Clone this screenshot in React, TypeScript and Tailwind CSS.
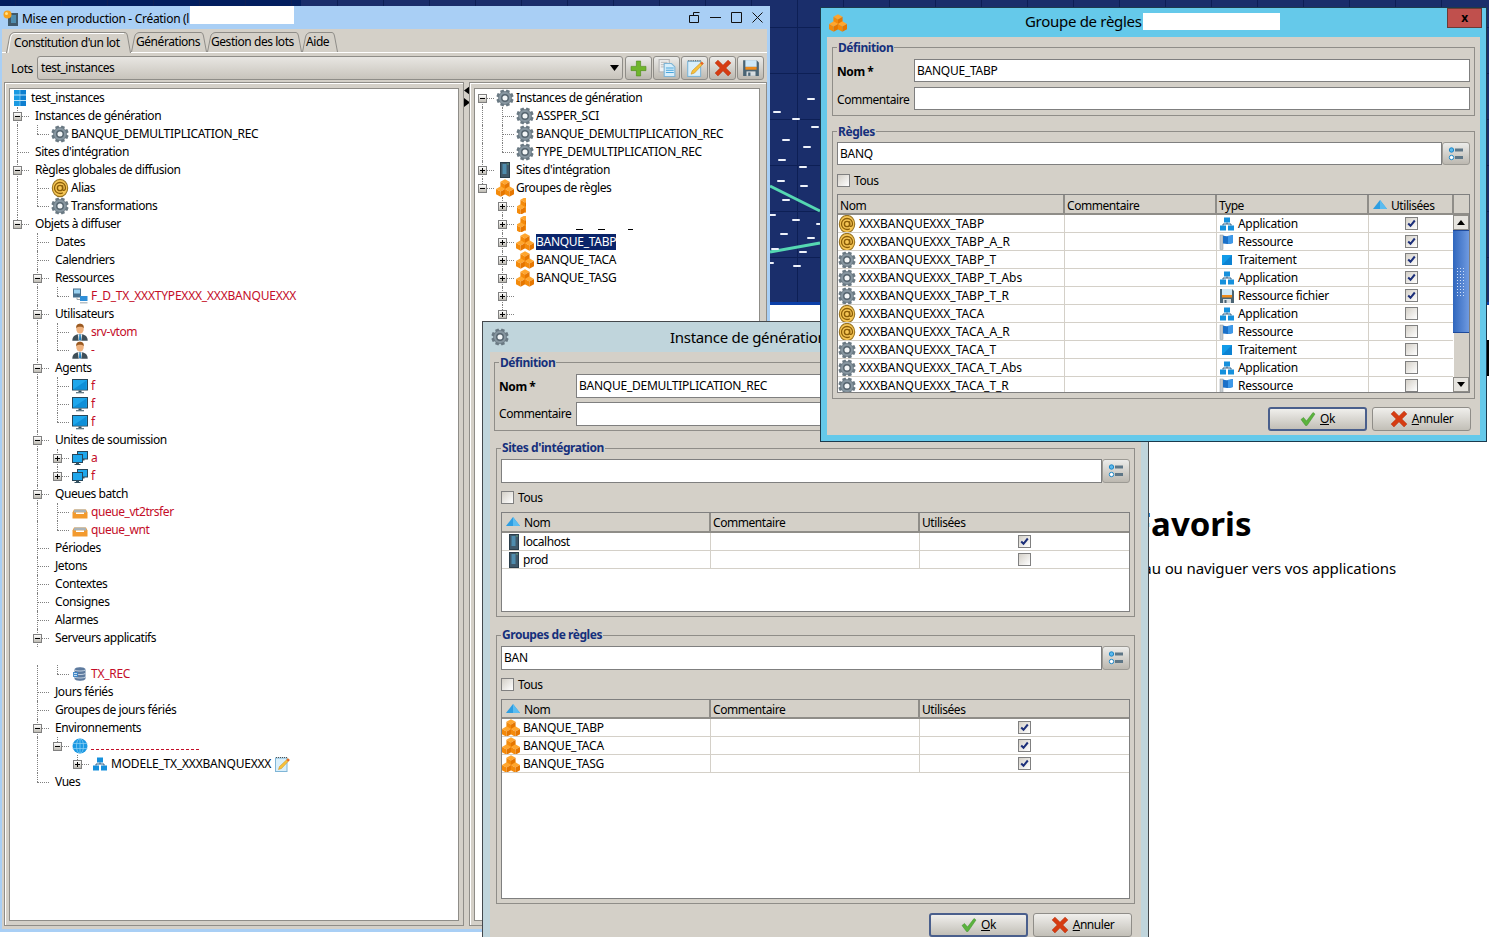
import React from "react";

type IconName =
  | "gear" | "at" | "cubes" | "server" | "monitor" | "monitors" | "hier" | "flag" | "square" | "floppy"
  | "note" | "tray" | "db" | "user" | "res" | "stack" | "globe" | "plus" | "copy" | "cross" | "check" | "list" | "sort";

const gearPath = (() => {
  const n = 8;
  let d = "";
  for (let i = 0; i < n; i++) {
    const a = (i / n) * Math.PI * 2 + Math.PI / 8;
    const w = 0.23;
    const pts: [number, number][] = [
      [6.1, a - w * 1.35],
      [8, a - w * 0.85],
      [8, a + w * 0.85],
      [6.1, a + w * 1.35],
    ];
    pts.forEach(([r, t], idx) => {
      const x = (8 + r * Math.cos(t)).toFixed(2);
      const y = (8 + r * Math.sin(t)).toFixed(2);
      d += (i === 0 && idx === 0 ? "M" : "L") + x + " " + y + " ";
    });
  }
  return d + "Z";
})();

function Cube({ x, y, r }: { x: number; y: number; r: number }) {
  const k = r * 0.87;
  return (
    <g>
      <path d={`M${x} ${y - r}L${x + k} ${y - r / 2}L${x} ${y}L${x - k} ${y - r / 2}Z`} fill="#ffa62e" />
      <path d={`M${x - k} ${y - r / 2}L${x} ${y}L${x} ${y + r}L${x - k} ${y + r / 2}Z`} fill="#f48a0a" />
      <path d={`M${x + k} ${y - r / 2}L${x} ${y}L${x} ${y + r}L${x + k} ${y + r / 2}Z`} fill="#e57600" />
    </g>
  );
}

function Icon({ name, className = "w-4 h-4" }: { name: IconName; className?: string }) {
  const p = { viewBox: "0 0 16 16", className: className + " shrink-0 overflow-visible" };
  const big = { viewBox: "0 0 16 16", className: className + " shrink-0 overflow-visible scale-[1.1]" };
  switch (name) {
    case "gear":
      return (
        <svg {...big}>
          <path d={gearPath} fill="#6a7983" />
          <circle cx="8" cy="8" r="5.6" fill="#8796a0" />
          <circle cx="8" cy="8" r="3.6" fill="#55646e" />
          <circle cx="8" cy="8" r="2.3" fill="#f2f5f6" />
        </svg>
      );
    case "at":
      return (
        <svg {...big}>
          <ellipse cx="8" cy="8" rx="7" ry="7.8" fill="#f6c655" stroke="#9a7420" strokeWidth="1" />
          <circle cx="8" cy="8" r="2.4" fill="none" stroke="#8a5d08" strokeWidth="1.3" />
          <path d="M10.4 5.6V9.2c0 1.6 2.6 1.4 2.6-1.2 0-3-2.2-5-5-5S3 5.2 3 8s2.2 5 5 5c1 0 1.8-.2 2.6-.7" fill="none" stroke="#8a5d08" strokeWidth="1.2" />
        </svg>
      );
    case "cubes":
      return (
        <svg {...big}>
          <Cube x={8} y={4.8} r={4.8} />
          <Cube x={4} y={11.2} r={4.8} />
          <Cube x={12} y={11.2} r={4.8} />
        </svg>
      );
    case "server":
      return (
        <svg {...p}>
          <rect x="3.5" y="0.5" width="9" height="15" fill="#40596a" stroke="#2b3e4b" />
          <path d="M5.5 3h4M5.5 5h4M5.5 7h4M5.5 9h4M5.5 11h4" stroke="#5ec1f1" strokeWidth="1" />
          <rect x="10.5" y="1.5" width="1" height="1" fill="#7fe27f" />
        </svg>
      );
    case "monitor":
      return (
        <svg {...p}>
          <rect x="0.5" y="1.5" width="15" height="10.5" fill="#1ea7ec" stroke="#26465a" />
          <path d="M1 11.5 14.5 2.5V11.5Z" fill="#0e8fd8" />
          <path d="M6.5 12.5h3v1.5h-3ZM4 14.2h8v1H4Z" fill="#33505f" />
        </svg>
      );
    case "monitors":
      return (
        <svg {...p}>
          <rect x="5.5" y="1.5" width="10" height="7.5" fill="#1ea7ec" stroke="#26465a" />
          <path d="M9.5 9h3v1.5h-3Z" fill="#33505f" />
          <rect x="0.5" y="4.5" width="10" height="8" fill="#1ea7ec" stroke="#26465a" />
          <path d="M4 12.5h3v1.5h-3ZM2.5 14h6v1h-6Z" fill="#33505f" />
        </svg>
      );
    case "hier":
      return (
        <svg {...p}>
          <rect x="5" y="1.5" width="6" height="5" fill="#1590dc" />
          <rect x="1" y="9.5" width="6" height="5" fill="#1590dc" />
          <rect x="9" y="9.5" width="6" height="5" fill="#1590dc" />
          <path d="M8 6.5v1.5M4 9.5V8h8v1.5" fill="none" stroke="#2e5f86" />
        </svg>
      );
    case "flag":
      return (
        <svg {...p}>
          <rect x="1" y="1" width="3" height="14.500" fill="#c3c9cd" stroke="#8f979d" strokeWidth="0.5" />
          <path d="M4 1.500c3 1 6 .8 10-.5v8c-3 1-6 1.200-10 .6Z" fill="#1a70c8" />
          <path d="M9 1.800c2-.1 3.300-.4 5-.8v8c-1.500.5-3 .8-5 .9Z" fill="#3d98e8" />
        </svg>
      );
    case "square":
      return (
        <svg {...p}>
          <rect x="3" y="3" width="10" height="10" fill="#129be8" />
          <path d="M3 13 13 3v10Z" fill="#0c82d2" />
        </svg>
      );
    case "floppy":
      return (
        <svg {...p}>
          <path d="M1 1h12l2 2v12H1Z" fill="#4a6474" />
          <rect x="3" y="1" width="10" height="6" fill="#cfe8f8" />
          <rect x="3" y="7" width="10" height="2.500" fill="#ef8a1b" />
          <rect x="4" y="11" width="8" height="4" fill="#d7dde0" />
          <rect x="5.500" y="12" width="2" height="3" fill="#4a6474" />
        </svg>
      );
    case "note":
      return (
        <svg {...p}>
          <rect x="1.500" y="2" width="11.500" height="13.500" fill="#d9effb" stroke="#7fb5d6" />
          <path d="M2 1.500h11" stroke="#555" strokeDasharray="1 1" />
          <path d="M14 2.500l1.500 1.500-8 8.500-3 1 1-3Z" fill="#f8c23c" stroke="#c98a16" strokeWidth="0.5" />
          <path d="M14 2.500l1.500 1.500-1.300 1.400-1.500-1.500Z" fill="#e85d2c" />
        </svg>
      );
    case "tray":
      return (
        <svg {...p}>
          <path d="M2 5.500h12l1.500 3v6H.5v-6Z" fill="#f39a2d" />
          <path d="M2.500 5.500h11l1 3h-13Z" fill="#aab3b8" />
          <path d="M4 8.500h8v1.500H4Z" fill="#fff" />
        </svg>
      );
    case "db":
      return (
        <svg {...p}>
          <path d="M2.500 3.500c0-3 11-3 11 0v9c0 3-11 3-11 0Z" fill="#5d7a9e" />
          <path d="M2.500 3.500c0 2 11 2 11 0M2.500 7c0 2 11 2 11 0M2.500 10.500c0 2 11 2 11 0" fill="none" stroke="#cfdbe8" strokeWidth="0.9" />
          <path d="M1 6h5v5H1Z" fill="#3c85c6" opacity="0.9" />
          <path d="M2 7.500h3M2 9.500h3" stroke="#e6f2fb" strokeWidth="0.8" />
        </svg>
      );
    case "user":
      return (
        <svg {...big}>
          <path d="M1 16c0-4 2.500-5.500 5-6h4c2.500.5 5 2 5 6Z" fill="#3f4f58" />
          <path d="M6 10h4l-.8 6H6.800Z" fill="#e8eef1" />
          <path d="M7.400 10h1.200l.5 5-1 1-1-1Z" fill="#1c7fc0" />
          <ellipse cx="8" cy="5" rx="3.400" ry="4.500" fill="#efb27e" />
          <path d="M4.600 4.500C4.300 1.500 6 .5 8 .5s3.700 1 3.400 4C10 2.700 6 2.700 4.600 4.500Z" fill="#9a5a22" />
        </svg>
      );
    case "res":
      return (
        <svg {...p}>
          <rect x="1" y="0.500" width="8" height="9" fill="#46708f" />
          <rect x="2" y="1.500" width="6" height="4" fill="#9ad2f2" />
          <path d="M5 9.500v2h4" fill="none" stroke="#9aa4aa" />
          <rect x="8" y="8" width="7.500" height="5" fill="#2f8fd8" />
          <path d="M8 14h7.500v1.500H8Z" fill="#b7c1c7" />
        </svg>
      );
    case "stack":
      return (
        <svg {...p}>
          <rect x="2" y="0" width="12" height="16" fill="#1a9ae2" />
          <rect x="8" y="0" width="6" height="16" fill="#0e7fd0" />
          <path d="M2 5h12M2 10.500h12" stroke="#bfe6fb" strokeWidth="1" />
          <path d="M8 0v16" stroke="#bfe6fb" strokeWidth="0.5" />
        </svg>
      );
    case "globe":
      return (
        <svg {...p}>
          <circle cx="8" cy="8" r="7.500" fill="#1a98e2" />
          <path d="M.5 5.500h15M.5 10.500h15M8 .5v15" stroke="#8fd3f7" strokeWidth="0.7" />
          <ellipse cx="8" cy="8" rx="3.500" ry="7.500" fill="none" stroke="#8fd3f7" strokeWidth="0.7" />
        </svg>
      );
    case "plus":
      return (
        <svg {...p}>
          <path d="M6 1h4v5h5v4h-5v5H6v-5H1V6h5Z" fill="#6fb52c" stroke="#4f8a1c" strokeWidth="0.6" />
        </svg>
      );
    case "copy":
      return (
        <svg {...p}>
          <rect x="1" y="0.500" width="9" height="11" fill="#f1f1f1" stroke="#b5b5b5" />
          <path d="M2.500 3h6M2.500 5h6M2.500 7h6" stroke="#c3c3c3" />
          <path d="M5.500 4h6.500l3 3v8.500H5.500Z" fill="#d7eefb" stroke="#7fb5d6" />
          <path d="M7 8h7M7 10h7M7 12h7" stroke="#4aa5dc" />
        </svg>
      );
    case "cross":
      return (
        <svg {...p}>
          <path d="M1 3.500 3.500 1 8 5.500 12.500 1 15 3.500 10.500 8 15 12.500 12.500 15 8 10.500 3.500 15 1 12.500 5.500 8Z" fill="#d63c12" stroke="#b52e0b" strokeWidth="0.5" />
        </svg>
      );
    case "check":
      return (
        <svg {...p}>
          <path d="M1 8.500 3.500 6.500 6.500 10 13 1.500 15 3 7 14.500H5.500Z" fill="#5bb33d" stroke="#3d8f2a" strokeWidth="0.5" />
        </svg>
      );
    case "list":
      return (
        <svg {...p}>
          <circle cx="3.500" cy="4" r="2.200" fill="#5ab8ec" stroke="#1a86c8" />
          <circle cx="3.500" cy="11.500" r="2.200" fill="#fff" stroke="#1a86c8" />
          <rect x="7" y="2.500" width="8" height="3" fill="#5e7686" />
          <rect x="7" y="10" width="8" height="3" fill="#5e7686" />
        </svg>
      );
    case "sort":
      return (
        <svg {...p}>
          <path d="M8 2 15 11H1Z" fill="#2d9ee2" />
          <path d="M8 2 15 11H8Z" fill="#5bbcf0" />
        </svg>
      );
  }
}

type Row = {
  l: number;
  e?: "+" | "-";
  i?: IconName;
  t?: string;
  red?: boolean;
  blank?: boolean;
  sel?: boolean;
  clip?: boolean;
  note?: boolean;
  dashes?: boolean;
  marks?: boolean;
};

const leftTree: Row[] = [
  { l: 0, i: "stack", t: "test_instances" },
  { l: 1, e: "-", t: "Instances de génération" },
  { l: 2, i: "gear", t: "BANQUE_DEMULTIPLICATION_REC" },
  { l: 1, t: "Sites d'intégration" },
  { l: 1, e: "-", t: "Règles globales de diffusion" },
  { l: 2, i: "at", t: "Alias" },
  { l: 2, i: "gear", t: "Transformations" },
  { l: 1, e: "-", t: "Objets à diffuser" },
  { l: 2, t: "Dates" },
  { l: 2, t: "Calendriers" },
  { l: 2, e: "-", t: "Ressources" },
  { l: 3, i: "res", t: "F_D_TX_XXXTYPEXXX_XXXBANQUEXXX", red: true },
  { l: 2, e: "-", t: "Utilisateurs" },
  { l: 3, i: "user", t: "srv-vtom", red: true },
  { l: 3, i: "user", t: "-", red: true },
  { l: 2, e: "-", t: "Agents" },
  { l: 3, i: "monitor", t: "f", red: true },
  { l: 3, i: "monitor", t: "f", red: true },
  { l: 3, i: "monitor", t: "f", red: true },
  { l: 2, e: "-", t: "Unites de soumission" },
  { l: 3, e: "+", i: "monitors", t: "a", red: true },
  { l: 3, e: "+", i: "monitors", t: "f", red: true },
  { l: 2, e: "-", t: "Queues batch" },
  { l: 3, i: "tray", t: "queue_vt2trsfer", red: true },
  { l: 3, i: "tray", t: "queue_wnt", red: true },
  { l: 2, t: "Périodes" },
  { l: 2, t: "Jetons" },
  { l: 2, t: "Contextes" },
  { l: 2, t: "Consignes" },
  { l: 2, t: "Alarmes" },
  { l: 2, e: "-", t: "Serveurs applicatifs" },
  { l: 3, blank: true },
  { l: 3, i: "db", t: "TX_REC", red: true },
  { l: 2, t: "Jours fériés" },
  { l: 2, t: "Groupes de jours fériés" },
  { l: 2, e: "-", t: "Environnements" },
  { l: 3, e: "-", i: "globe", dashes: true },
  { l: 4, e: "+", i: "hier", t: "MODELE_TX_XXXBANQUEXXX", note: true },
  { l: 2, t: "Vues" },
];

const rightTree: Row[] = [
  { l: 1, e: "-", i: "gear", t: "Instances de génération" },
  { l: 2, i: "gear", t: "ASSPER_SCI" },
  { l: 2, i: "gear", t: "BANQUE_DEMULTIPLICATION_REC" },
  { l: 2, i: "gear", t: "TYPE_DEMULTIPLICATION_REC" },
  { l: 1, e: "+", i: "server", t: "Sites d'intégration" },
  { l: 1, e: "-", i: "cubes", t: "Groupes de règles" },
  { l: 2, e: "+", i: "cubes", clip: true },
  { l: 2, e: "+", i: "cubes", clip: true, marks: true },
  { l: 2, e: "+", i: "cubes", t: "BANQUE_TABP", sel: true },
  { l: 2, e: "+", i: "cubes", t: "BANQUE_TACA" },
  { l: 2, e: "+", i: "cubes", t: "BANQUE_TASG" },
  { l: 2, e: "+" },
  { l: 2, e: "+" },
];

function Tree({ rows }: { rows: Row[] }) {
  const vx = (l: number) => 7 + (l - 1) * 20;
  return (
    <div className="w-full">
      {rows.map((r, i) => {
        const guides: React.ReactNode[] = [];
        if (!r.blank && r.l > 0) {
          for (let k = 1; k < r.l; k++) {
            let pass = false;
            for (let j = i + 1; j < rows.length; j++) {
              if (rows[j].l < k) break;
              if (rows[j].l === k) {
                pass = true;
                break;
              }
            }
            if (pass)
              guides.push(
                <span key={k} className="absolute top-0 bottom-0 border-l border-dotted border-[#808080]" style={{ left: vx(k) }} />
              );
          }
          let next = false;
          for (let j = i + 1; j < rows.length; j++) {
            if (rows[j].l < r.l) break;
            if (rows[j].l === r.l) {
              next = true;
              break;
            }
          }
          guides.push(
            <span
              key="own"
              className="absolute border-l border-dotted border-[#808080]"
              style={{ left: vx(r.l), top: i === 0 ? 9 : 0, bottom: next ? 0 : 9 }}
            />
          );
          guides.push(
            <span key="h" className="absolute top-[9px] h-0 border-t border-dotted border-[#808080]" style={{ left: vx(r.l), width: 12 }} />
          );
        }
        const pad = r.l === 0 ? 2 : r.i ? vx(r.l) + 15 : vx(r.l) + 18;
        const upper = !!r.t && /^[A-Z_ ]+$/.test(r.t);
        const xxx = !!r.t && r.t.includes("XXX");
        return (
          <div key={i} className="relative flex h-[18px] items-center" style={{ paddingLeft: pad }}>
            {guides}
            {r.e && (
              <span
                className="absolute top-[5px] z-10 flex h-[9px] w-[9px] items-center justify-center border border-[#808080] bg-gradient-to-b from-white to-[#bdbab2]"
                style={{ left: vx(r.l) - 4 }}
              >
                <span className="relative block h-px w-[5px] bg-black">
                  {r.e === "+" && <span className="absolute -top-[2px] left-[2px] h-[5px] w-px bg-black" />}
                </span>
              </span>
            )}
            {r.i &&
              (r.clip ? (
                <span className="block h-4 w-[9px] overflow-hidden">
                  <Icon name={r.i} />
                </span>
              ) : (
                <Icon name={r.i} />
              ))}
            {r.t && (
              <span
                className={
                  (r.i ? "ml-[3px] " : "") +
                  "whitespace-nowrap " +
                  (xxx ? "tracking-[-0.2px] " : upper ? "tracking-[-0.28px] " : "") +
                  (r.sel ? "bg-[#0a246a] text-white " : "") +
                  (r.red ? "text-[#c40d28]" : "text-black")
                }
              >
                {r.t}
              </span>
            )}
            {r.dashes && <span className="ml-[3px] mt-[6px] block h-0 w-[108px] border-t border-dashed border-[#c40d28]" />}
            {r.marks && (
              <span className="ml-[50px] mt-[10px] flex gap-[15px]">
                <span className="block h-px w-[7px] bg-black" />
                <span className="block h-px w-[7px] bg-black" />
                <span className="ml-[8px] block h-px w-[5px] bg-black" />
              </span>
            )}
            {r.note && <Icon name="note" className="ml-[3px] h-4 w-4" />}
          </div>
        );
      })}
    </div>
  );
}

function Tab({ label, w, active, pl }: { label: string; w: number; active?: boolean; pl: string }) {
  const h = active ? 21 : 20;
  const d = `M0.5 ${h} L3.5 5 Q4.500 .5 9 .5 H${w - 6} Q${w - 4} .5 ${w - 3.500} 4 L${w - 0.5} ${h}`;
  return (
    <div
      className={
        "relative flex shrink-0 items-center " +
        pl +
        (active ? " -mb-px h-[21px] bg-[#d4d0c8]" : " h-[20px]")
      }
      style={{ width: w }}
    >
      <svg viewBox={`0 0 ${w} ${h}`} className="absolute left-0 top-0 overflow-visible" width={w} height={h} fill="none">
        <path d={d} stroke="#8f8d88" />
        {active && <path d={`M2 ${h} L4.500 6 Q5.500 1.500 9 1.500 H${w - 7}`} stroke="#ffffff" />}
      </svg>
      <span className="relative">{label}</span>
    </div>
  );
}

function ToolBtn({ name }: { name: IconName }) {
  return (
    <button className="flex h-6 w-[27px] items-center justify-center rounded-[3px] border border-[#8f8d88] bg-gradient-to-b from-[#ececea] to-[#bcb8b0]">
      <Icon name={name} className={name === "plus" ? "h-[17px] w-[17px]" : "h-[18px] w-[18px]"} />
    </button>
  );
}

function Fieldset({
  legend,
  className,
  legendClass = "-top-[9px]",
  children,
}: {
  legend: string;
  className: string;
  legendClass?: string;
  children: React.ReactNode;
}) {
  return (
    <div className={"relative border border-[#8f8d88] " + className}>
      <span className={"absolute left-[4px] bg-[#d4d0c8] px-[1px] font-bold leading-[18px] text-[#16307c] " + legendClass}>{legend}</span>
      {children}
    </div>
  );
}

function Input({ value = "", className = "" }: { value?: string; className?: string }) {
  return <div className={"flex items-center border border-[#7f7f7f] bg-white pl-[2px] tracking-[-0.25px] " + className}>{value}</div>;
}

function ListBtn({ h }: { h: string }) {
  return (
    <button className={"flex w-[28px] items-center justify-center rounded-[3px] border border-[#9c9a94] bg-gradient-to-b from-[#ececea] to-[#bcb8b0] " + h}>
      <Icon name="list" />
    </button>
  );
}

function Check({ on = false }: { on?: boolean }) {
  return (
    <span className="flex h-[13px] w-[13px] items-center justify-center border border-[#808080] bg-gradient-to-br from-[#d4d0c8] to-white">
      {on && (
        <svg viewBox="0 0 9 9" className="h-[9px] w-[9px]">
          <path d="M1.200 4.500 3.500 6.800 7.800 1.500" fill="none" stroke="#1c2f7a" strokeWidth="2" />
        </svg>
      )}
    </span>
  );
}

function Tous() {
  return (
    <div className="flex h-[13px] items-center gap-[4px]">
      <Check />
      <span>Tous</span>
    </div>
  );
}

function HeadCell({ children }: { children?: React.ReactNode }) {
  return (
    <div className="flex h-full items-center gap-[3px] overflow-hidden border-r-2 border-[#8f8d88] pl-[2px] pt-[2px] whitespace-nowrap last:border-r-0">
      {children}
    </div>
  );
}

function Sort() {
  return <Icon name="sort" className="ml-[1px] h-4 w-4" />;
}

function Cell({ children, last, center }: { children?: React.ReactNode; last?: boolean; center?: boolean }) {
  return (
    <div
      className={
        "flex h-full items-center overflow-hidden whitespace-nowrap border-b border-[#d4d0c8] " +
        (last ? "" : "border-r ") +
        (center ? "justify-center" : "")
      }
    >
      {children}
    </div>
  );
}

function OkCancel() {
  return (
    <div className="flex justify-end gap-[5px]">
      <button className="flex h-[24px] w-[99px] items-center justify-center gap-[4px] rounded-[3px] border-2 border-[#4a5f8c] bg-gradient-to-b from-[#f0efec] to-[#c2bfb7]">
        <Icon name="check" />
        <span>
          <u>O</u>k
        </span>
      </button>
      <button className="flex h-[24px] w-[99px] items-center justify-center gap-[4px] rounded-[3px] border border-[#8f8d88] bg-gradient-to-b from-[#f0efec] to-[#c2bfb7]">
        <Icon name="cross" className="h-[18px] w-[18px]" />
        <span>
          <u>A</u>nnuler
        </span>
      </button>
    </div>
  );
}

const regles: [IconName, string, IconName, string, boolean][] = [
  ["at", "XXXBANQUEXXX_TABP", "hier", "Application", true],
  ["at", "XXXBANQUEXXX_TABP_A_R", "flag", "Ressource", true],
  ["gear", "XXXBANQUEXXX_TABP_T", "square", "Traitement", true],
  ["gear", "XXXBANQUEXXX_TABP_T_Abs", "hier", "Application", true],
  ["gear", "XXXBANQUEXXX_TABP_T_R", "floppy", "Ressource fichier", true],
  ["at", "XXXBANQUEXXX_TACA", "hier", "Application", false],
  ["at", "XXXBANQUEXXX_TACA_A_R", "flag", "Ressource", false],
  ["gear", "XXXBANQUEXXX_TACA_T", "square", "Traitement", false],
  ["gear", "XXXBANQUEXXX_TACA_T_Abs", "hier", "Application", false],
  ["gear", "XXXBANQUEXXX_TACA_T_R", "flag", "Ressource", false],
];

const dashes: [number, number][] = [
  [777, 112], [796, 119], [811, 99], [815, 127], [786, 140], [807, 147], [782, 160], [803, 167], [781, 181], [804, 186],
  [786, 200], [772, 215], [796, 220], [784, 234], [811, 238], [775, 249], [803, 252], [770, 263], [797, 266], [820, 224],
];

function Desktop() {
  const vs: number[] = [];
  for (let x = 25; x < 1489; x += 46) vs.push(x - 0);
  const hs = [27, 73, 119, 165, 211, 257];
  return (
    <svg viewBox="0 0 1489 302" className="block h-[302px] w-[1489px]">
      <rect width="1489" height="302" fill="#1a2e6b" />
      <rect width="301" height="6" fill="#031e5e" />
      {vs.map((x) => (
        <path key={x} d={`M${x - 9.5} 0V302`} stroke="#0d1f55" />
      ))}
      {hs.map((y) => (
        <path key={y} d={`M0 ${y + 0.5}H1489`} stroke="#0d1f55" />
      ))}
      <path d="M770 186 820 211" stroke="#55d8b2" strokeWidth="3" />
      <path d="M770 252 820 243" stroke="#55d8b2" strokeWidth="3" />
      {dashes.map(([x, y], i) => (
        <rect key={i} x={x - 4} y={y - 1} width="8" height="2" rx="1" fill="#eef2fb" />
      ))}
    </svg>
  );
}

export default function App() {
  return (
    <div className="relative h-[937px] w-[1489px] overflow-hidden bg-white font-['Noto_Sans',sans-serif] text-[12px] leading-[16px] tracking-[-0.44px] text-black">
      {/* desktop behind the windows */}
      <Desktop />
      <div className="h-[3px] bg-[#0b3fa8]" />
      <div className="ml-[1000px] w-[489px] tracking-normal">
        <h1 className="mt-[197px] ml-[133px] text-[33px] leading-[44px] font-bold">Favoris</h1>
        <p className="mt-[11px] pr-[93px] text-right text-[15px] leading-[22px] tracking-[-0.1px] whitespace-nowrap">
          du bureau ou naviguer vers vos applications
        </p>
      </div>
      <div className="absolute right-0 top-[340px] h-[36px] w-[2px] bg-black" />

      {/* main window */}
      <div className="absolute left-0 top-[6px] flex h-[926px] w-[770px] flex-col bg-[#a9cff5]">
        <div className="relative flex h-[23px] shrink-0 items-center pl-[3px]">
          <svg viewBox="0 0 16 16" className="h-4 w-4 shrink-0">
            <rect x="5" y="3" width="10" height="13" fill="#40596a" />
            <path d="M8 6h5M8 8h5M8 10h5M8 12h5" stroke="#5ec1f1" />
            <circle cx="4.500" cy="4.500" r="4" fill="#f6a21c" />
            <circle cx="3.500" cy="3.500" r="1.500" fill="#ffe28a" />
          </svg>
          <span className="ml-[3px] whitespace-nowrap pt-[2px] tracking-[-0.3px]">Mise en production - Création (l</span>
          <span className="absolute left-[190px] top-0 h-[18px] w-[104px] bg-white" />
          <div className="ml-auto flex items-center gap-[10px] pr-[7px]">
            <svg viewBox="0 0 11 11" className="h-[11px] w-[11px]" fill="none" stroke="#111">
              <path d="M.5 3.500h9v7h-9ZM4.500 3.500V.5h6" />
            </svg>
            <svg viewBox="0 0 11 11" className="h-[11px] w-[11px]" fill="none" stroke="#111">
              <path d="M0 5.500h11" />
            </svg>
            <svg viewBox="0 0 11 11" className="h-[11px] w-[11px]" fill="none" stroke="#111">
              <path d="M.5.500h10v10H.5Z" />
            </svg>
            <svg viewBox="0 0 11 11" className="h-[11px] w-[11px]" fill="none" stroke="#111">
              <path d="M.5.500l10 10M10.500.5l-10 10" />
            </svg>
          </div>
        </div>
        <div className="ml-[2px] mr-[3px] mb-[3px] flex min-h-0 flex-1 flex-col bg-[#d4d0c8]">
          <div className="flex h-[24px] shrink-0 items-end border-b border-white pl-[4px] whitespace-nowrap">
            <Tab label="Constitution d'un lot" w={125} active pl="pl-[8px]" />
            <Tab label="Générations" w={76} pl="pl-[5px]" />
            <Tab label="Gestion des lots" w={95} pl="pl-[4px]" />
            <Tab label="Aide" w={36} pl="pl-[4px]" />
          </div>
          <div className="flex h-[29px] shrink-0 items-end pb-[2px] pl-[9px]">
            <span className="w-[26px] pb-[3px]">Lots</span>
            <div className="mr-[2px] flex h-6 w-[586px] items-center justify-between rounded-[3px] border border-[#8f8d88] bg-gradient-to-b from-[#e8e6e2] to-[#c8c4bc] pl-[3px] pr-[3px]">
              <span>test_instances</span>
              <svg viewBox="0 0 9 6" className="h-[6px] w-[9px]">
                <path d="M0 0h9L4.500 6Z" fill="#000" />
              </svg>
            </div>
            <div className="flex gap-[1px]">
              <ToolBtn name="plus" />
              <ToolBtn name="copy" />
              <ToolBtn name="note" />
              <ToolBtn name="cross" />
              <ToolBtn name="floppy" />
            </div>
          </div>
          <div className="flex min-h-0 flex-1 pl-[2px] pb-[3px]">
            <div className="flex h-full w-[460px] border border-[#8f8d88] p-[4px] pt-[5px] shadow-[inset_1px_1px_0_#fff]">
              <div className="h-full w-full overflow-hidden border border-[#8f8d88] bg-white">
                <Tree rows={leftTree} />
              </div>
            </div>
            <div className="flex w-[5px] shrink-0 flex-col pt-[4px]">
              <svg viewBox="0 0 6 9" className="mb-[3px] h-[9px] w-[6px] overflow-visible">
                <path d="M6 0V9L0 4.500Z" fill="#000" />
              </svg>
              <svg viewBox="0 0 6 9" className="h-[9px] w-[6px] overflow-visible">
                <path d="M0 0V9L6 4.500Z" fill="#000" />
              </svg>
            </div>
            <div className="flex h-full w-[298px] border border-[#8f8d88] p-[4px] pt-[5px] pr-[6px] shadow-[inset_1px_1px_0_#fff]">
              <div className="h-full w-full overflow-hidden border border-[#8f8d88] bg-white">
                <Tree rows={rightTree} />
              </div>
            </div>
          </div>
        </div>
      </div>

      {/* Instance de génération */}
      <div className="absolute left-[482px] top-[321px] flex h-[640px] w-[667px] flex-col border border-[#44484c] bg-[#c0d5dc]">
        <div className="relative flex h-[30px] shrink-0 items-center pl-[9px]">
          <Icon name="gear" />
          <span className="absolute left-[187px] top-[5px] text-[15px] leading-[20px] tracking-[-0.3px] whitespace-nowrap">Instance de génération</span>
        </div>
        <div className="mx-[7px] flex min-h-0 flex-1 flex-col bg-[#d4d0c8] pt-[10px]">
          <Fieldset legend="Définition" className="ml-[4px] mr-[5px] flex h-[69px] flex-col gap-[5px] pt-[11px] pl-[4px] pr-[2px]">
            <div className="flex h-[23px] items-center">
              <span className="w-[77px] pt-[2px] font-bold">Nom *</span>
              <Input value="BANQUE_DEMULTIPLICATION_REC" className="h-[24px] flex-1" />
            </div>
            <div className="flex h-[23px] items-center">
              <span className="w-[77px]">Commentaire</span>
              <Input className="h-[24px] flex-1" />
            </div>
          </Fieldset>
          <Fieldset
            legend="Sites d'intégration"
            legendClass="-top-[10px]"
            className="mt-[17px] ml-[6px] mr-[6px] flex h-[169px] flex-col px-[4px] pt-[10px]"
          >
            <div className="flex">
              <Input className="h-[24px] flex-1" />
              <ListBtn h="h-[24px]" />
            </div>
            <div className="mt-[8px]">
              <Tous />
            </div>
            <div className="mt-[8px] h-[100px] border border-[#7f7f7f] bg-white">
              <div className="grid h-[20px] grid-cols-[209px_209px_1fr] border-b-2 border-[#8f8d88] bg-[#d4d0c8]">
                <HeadCell>
                  <Sort />
                  Nom
                </HeadCell>
                <HeadCell>Commentaire</HeadCell>
                <HeadCell>Utilisées</HeadCell>
              </div>
              {[
                ["localhost", true],
                ["prod", false],
              ].map(([n, on]) => (
                <div key={n as string} className="grid h-[18px] grid-cols-[209px_209px_1fr]">
                  <Cell>
                    <span className="ml-[4px]">
                      <Icon name="server" />
                    </span>
                    <span className="ml-[1px]">{n as string}</span>
                  </Cell>
                  <Cell />
                  <Cell last center>
                    <Check on={on as boolean} />
                  </Cell>
                </div>
              ))}
            </div>
          </Fieldset>
          <Fieldset
            legend="Groupes de règles"
            legendClass="-top-[10px]"
            className="mt-[18px] ml-[6px] mr-[6px] flex h-[269px] flex-col px-[4px] pt-[10px]"
          >
            <div className="flex">
              <Input value="BAN" className="h-[24px] flex-1" />
              <ListBtn h="h-[24px]" />
            </div>
            <div className="mt-[8px]">
              <Tous />
            </div>
            <div className="mt-[8px] h-[200px] border border-[#7f7f7f] bg-white">
              <div className="grid h-[19px] grid-cols-[209px_209px_1fr] border-b-2 border-[#8f8d88] bg-[#d4d0c8]">
                <HeadCell>
                  <Sort />
                  Nom
                </HeadCell>
                <HeadCell>Commentaire</HeadCell>
                <HeadCell>Utilisées</HeadCell>
              </div>
              {["BANQUE_TABP", "BANQUE_TACA", "BANQUE_TASG"].map((n) => (
                <div key={n} className="grid h-[18px] grid-cols-[209px_209px_1fr]">
                  <Cell>
                    <span className="ml-[1px]">
                      <Icon name="cubes" />
                    </span>
                    <span className="ml-[4px] tracking-[-0.22px]">{n}</span>
                  </Cell>
                  <Cell />
                  <Cell last center>
                    <Check on />
                  </Cell>
                </div>
              ))}
            </div>
          </Fieldset>
          <div className="mt-[9px] mr-[9px]">
            <OkCancel />
          </div>
        </div>
      </div>

      {/* Groupe de règles */}
      <div className="absolute left-[820px] top-[7px] flex h-[435px] w-[667px] flex-col border border-[#1b3a4d] bg-[#65c9ea]">
        <div className="relative flex h-[29px] shrink-0 items-center pl-[9px]">
          <Icon name="cubes" />
          <span className="absolute left-[204px] top-[3px] text-[15px] leading-[20px] tracking-[-0.3px] whitespace-nowrap">Groupe de règles</span>
          <span className="absolute left-[322px] top-[5px] h-[17px] w-[137px] bg-white" />
          <button className="absolute right-[4px] top-0 flex h-[20px] w-[35px] items-center justify-center border border-[#6b3a36] bg-[#c0504d] font-bold text-black">
            x
          </button>
        </div>
        <div className="mx-[6px] mb-[6px] flex min-h-0 flex-1 flex-col bg-[#d4d0c8] pt-[10px]">
          <Fieldset legend="Définition" className="ml-[5px] mr-[5px] flex h-[69px] flex-col gap-[5px] pt-[11px] pl-[4px] pr-[4px]">
            <div className="flex h-[23px] items-center">
              <span className="w-[77px] pt-[2px] font-bold">Nom *</span>
              <Input value="BANQUE_TABP" className="h-[23px] flex-1" />
            </div>
            <div className="flex h-[23px] items-center">
              <span className="w-[77px] pt-[2px]">Commentaire</span>
              <Input className="h-[23px] flex-1" />
            </div>
          </Fieldset>
          <Fieldset legend="Règles" className="mt-[15px] ml-[5px] mr-[5px] flex h-[268px] flex-col px-[4px] pt-[10px]">
            <div className="flex">
              <Input value="BANQ" className="h-[23px] flex-1" />
              <ListBtn h="h-[23px]" />
            </div>
            <div className="mt-[9px]">
              <Tous />
            </div>
            <div className="mt-[7px] flex h-[199px] flex-col border border-[#7f7f7f] bg-white">
              <div className="grid h-[20px] shrink-0 grid-cols-[227px_152px_152px_85px_1fr] border-b-2 border-[#8f8d88] bg-[#d4d0c8] [&>div]:pt-[4px]">
                <HeadCell>Nom</HeadCell>
                <HeadCell>Commentaire</HeadCell>
                <HeadCell>Type</HeadCell>
                <HeadCell>
                  <Sort />
                  Utilisées
                </HeadCell>
                <HeadCell />
              </div>
              <div className="flex min-h-0 flex-1">
                <div className="w-[616px] overflow-hidden">
                  {regles.map(([ic, n, ti, t, on]) => (
                    <div key={n} className="grid h-[18px] grid-cols-[227px_152px_152px_85px]">
                      <Cell>
                        <span className="ml-[1px]">
                          <Icon name={ic} />
                        </span>
                        <span className="ml-[4px] tracking-[-0.02px]">{n}</span>
                      </Cell>
                      <Cell />
                      <Cell>
                        <span className="ml-[2px]">
                          <Icon name={ti} />
                        </span>
                        <span className="ml-[3px] tracking-[-0.3px]">{t}</span>
                      </Cell>
                      <Cell last center>
                        <Check on={on} />
                      </Cell>
                    </div>
                  ))}
                </div>
                <div className="flex w-[16px] flex-col bg-[#e6e4df]">
                  <div className="flex h-[15px] items-center justify-center border border-[#8f8d88] bg-[#e6e4df]">
                    <svg viewBox="0 0 8 5" className="h-[5px] w-2">
                      <path d="M4 0 8 5H0Z" fill="#000" />
                    </svg>
                  </div>
                  <div className="relative h-[103px] border-y border-[#1e4a9c] bg-gradient-to-r from-[#2f66bd] to-[#6f9ae0]">
                    <div className="absolute left-[3px] top-[36px] h-[30px] w-[10px] bg-[radial-gradient(#cfe0fa_1px,transparent_1px)] bg-[length:3px_3px]" />
                  </div>
                  <div className="flex-1 bg-[#d4d0c8] shadow-[inset_1px_0_0_#fff]" />
                  <div className="flex h-[15px] items-center justify-center border border-[#8f8d88] bg-[#e6e4df]">
                    <svg viewBox="0 0 8 5" className="h-[5px] w-2">
                      <path d="M0 0H8L4 5Z" fill="#000" />
                    </svg>
                  </div>
                </div>
              </div>
            </div>
          </Fieldset>
          <div className="mt-[8px] mr-[9px]">
            <OkCancel />
          </div>
        </div>
      </div>
    </div>
  );
}
